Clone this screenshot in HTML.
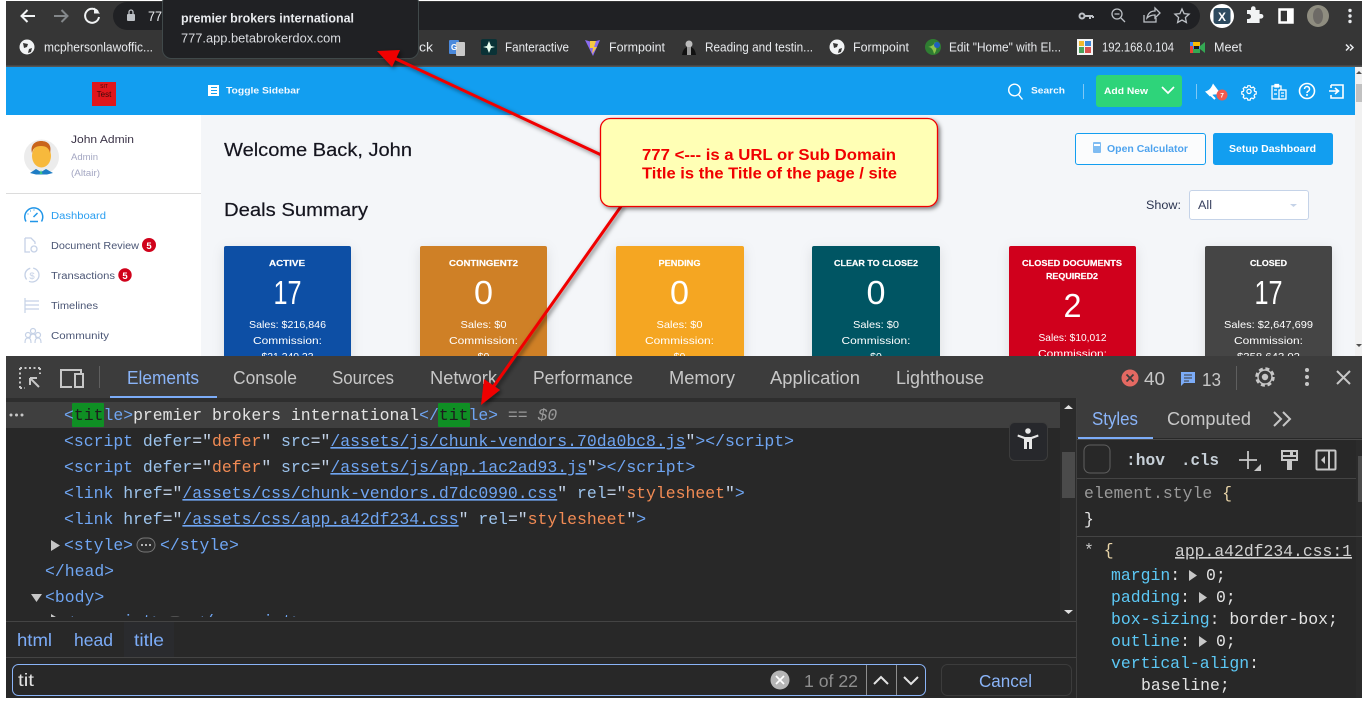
<!DOCTYPE html>
<html><head><meta charset="utf-8"><title>premier brokers international</title>
<style>
html,body{margin:0;padding:0;background:#fff;width:1366px;height:703px;overflow:hidden}
svg{display:block}
text{white-space:pre}
.s{font-family:"Liberation Sans",sans-serif}
.m{font-family:"Liberation Mono",monospace;font-size:16.45px}
.t{fill:#6fa5f2}.n{fill:#9cc3ec}.q{fill:#c5d4e8}.v{fill:#f28b54}.w{fill:#e3e3e3}.p{fill:#5cc8f5}
.c{font-family:"Liberation Sans",sans-serif;fill:#fff;text-anchor:middle}
</style></head><body>
<svg xmlns="http://www.w3.org/2000/svg" width="1366" height="703" viewBox="0 0 1366 703" class="s">
<defs>
<filter id="sh" x="-20%" y="-20%" width="140%" height="140%"><feDropShadow dx="2" dy="2" stdDeviation="2" flood-color="#000" flood-opacity=".5"/></filter>
<filter id="cs" x="-20%" y="-20%" width="140%" height="140%"><feDropShadow dx="0" dy="3" stdDeviation="6" flood-color="#000" flood-opacity=".1"/></filter>
<clipPath id="pg"><rect x="6" y="67" width="1356" height="289"/></clipPath>
<clipPath id="codeclip"><rect x="6" y="400" width="1054" height="217"/></clipPath>
</defs>
<rect width="1366" height="703" fill="#fff"/>

<!-- Browser chrome -->
<rect x="6" y="1" width="1356" height="66" fill="#363636"/>
<rect x="6" y="65.500" width="1356" height="1.500" fill="#555"/>
<rect x="113" y="2" width="1087" height="28" rx="14" fill="#202124"/>
<g fill="none" stroke="#f1f3f4" stroke-width="2">
<path d="M35 16H22M27.500 10l-6 6 6 6"/>
<path d="M54 16h13M61.500 10l6 6-6 6" stroke="#83878a"/>
<path d="M98 12a7 7 0 1 0 1 5"/>
</g>
<path d="M94 7.500v6h6z" fill="#f1f3f4"/>
<rect x="127" y="14" width="8" height="7" rx="1" fill="#bdc1c6"/><path d="M129 14v-2a2 2 0 0 1 4 0v2" fill="none" stroke="#bdc1c6" stroke-width="1.300"/>
<text x="148" y="21" font-size="14" fill="#e8eaed" textLength="14" lengthAdjust="spacingAndGlyphs">77</text>

<!-- address bar right icons -->
<g fill="none" stroke="#bdc1c6" stroke-width="1.300">
<circle cx="1082" cy="16" r="2.500" stroke-width="2"/><path d="M1085 16h8M1090 16v3M1093 16v2" stroke-width="2"/>
<circle cx="1117" cy="14" r="5"/><path d="M1121 18l4 4M1114.500 14h5"/>
<path d="M1144 15v7h12v-4M1147 18c1-5 4-7 8-7V8l5 5-5 5v-3c-3 0-6 1-8 3z"/>
<path d="M1182 9l2.100 4.600 5 .5-3.700 3.400 1 5-4.400-2.500-4.400 2.500 1-5-3.700-3.400 5-.5z"/>
</g>
<circle cx="1222" cy="16" r="12" fill="#fff"/>
<rect x="1213.500" y="8" width="17" height="16" rx="3" fill="#2d4a5f"/>
<text x="1222" y="21" font-size="12" font-weight="bold" fill="#fff" text-anchor="middle">X</text>
<path d="M1247 12h4v-1.500a2.300 2.300 0 0 1 4.600 0V12h4v4h1.500a2.300 2.300 0 0 1 0 4.600h-1.500V25h-12.600v-4h1.500a2.500 2.500 0 0 0 0-5h-1.500z" fill="#f1f3f4" transform="translate(0,-2)"/>
<rect x="1279.500" y="9.500" width="13" height="13" fill="none" stroke="#fff" stroke-width="2.500"/><rect x="1287" y="9" width="6" height="14" fill="#fff"/>
<circle cx="1318" cy="16" r="11" fill="#8f8d80"/><ellipse cx="1318" cy="16" rx="5" ry="8" fill="#6d6a66"/>
<g fill="#e8eaed"><circle cx="1350" cy="10.500" r="1.700"/><circle cx="1350" cy="16" r="1.700"/><circle cx="1350" cy="21.500" r="1.700"/></g>

<!-- Bookmarks -->
<g fill="#e8eaed" font-size="12.500">
<circle cx="27" cy="47" r="7.500" fill="#f1f3f4"/><path d="M23 43l5 1-1 3-3 1zM29 49l3-1-1 4-3 1z" fill="#363636"/>
<text x="44" y="51.500" textLength="109" lengthAdjust="spacingAndGlyphs">mcphersonlawoffic...</text>
<text x="419" y="51.500" textLength="14" lengthAdjust="spacingAndGlyphs">ck</text>
<rect x="449" y="40" width="10" height="14" rx="1" fill="#4a89dc"/><rect x="456" y="42" width="9" height="14" rx="1" fill="#c9c9c9"/>
<text x="451" y="50" font-size="8" font-weight="bold" fill="#fff">G</text>
<rect x="481" y="39" width="16" height="16" rx="2" fill="#0a3236"/><path d="M489 41l2 5 4 1-4 1-2 5-2-5-4-1 4-1z" fill="#eafff0"/>
<text x="505" y="51.500" textLength="64" lengthAdjust="spacingAndGlyphs">Fanteractive</text>
<path d="M585 40l7 2 8-2-7 16z" fill="#8a6cf0"/><path d="M590 41h6l-2 6h3l-5 7 1-6h-3z" fill="#f6c945"/>
<text x="609" y="51.500" textLength="56" lengthAdjust="spacingAndGlyphs">Formpoint</text>
<circle cx="689" cy="44" r="3.500" fill="#bbb"/><path d="M682 55c1-6 3-8 7-8s6 2 7 8z" fill="#111"/><rect x="687" y="47" width="4" height="8" fill="#999"/>
<text x="705" y="51.500" textLength="108" lengthAdjust="spacingAndGlyphs">Reading and testin...</text>
<circle cx="837" cy="47" r="7.500" fill="#f1f3f4"/><path d="M833 43l5 1-1 3-3 1zM839 49l3-1-1 4-3 1z" fill="#363636"/>
<text x="853" y="51.500" textLength="56" lengthAdjust="spacingAndGlyphs">Formpoint</text>
<circle cx="933" cy="47" r="8" fill="#2f7d32"/><path d="M928 47c3 0 5 2 6 7 3-3 3-8 1-12-1 3-3 4-7 5z" fill="#8bc34a"/><circle cx="937" cy="45" r="3" fill="#1e5fbf"/>
<text x="949" y="51.500" textLength="112" lengthAdjust="spacingAndGlyphs">Edit "Home" with El...</text>
<rect x="1077" y="39" width="16" height="16" fill="#f4f4f4"/><rect x="1079" y="41" width="5" height="5" fill="#f1b92c"/><rect x="1085" y="41" width="6" height="5" fill="#3f86d6"/><rect x="1079" y="47" width="5" height="6" fill="#4aa35a"/><rect x="1085" y="47" width="6" height="6" fill="#d9534f"/>
<text x="1102" y="51.500" textLength="72" lengthAdjust="spacingAndGlyphs">192.168.0.104</text>
<rect x="1190" y="42" width="10" height="11" fill="#4285f4"/><rect x="1193" y="42" width="7" height="4" fill="#fbbc04"/><rect x="1190" y="46" width="3" height="7" fill="#ea4335"/><rect x="1193" y="49" width="7" height="4" fill="#34a853"/><path d="M1200 46l5-4v11l-5-4z" fill="#34a853"/><rect x="1194" y="46" width="5" height="3" fill="#1a1a1a"/>
<text x="1214" y="51.500" textLength="28" lengthAdjust="spacingAndGlyphs">Meet</text>
<path d="M1346 44.500l3 3-3 3M1350 44.500l3 3-3 3" fill="none" stroke="#e8eaed" stroke-width="1.500"/>
</g>

<!-- Web page -->
<g clip-path="url(#pg)">
<rect x="6" y="67" width="1349" height="289" fill="#f4f6f9"/>
<rect x="6" y="67" width="1349" height="48" fill="#129ef0"/>
<rect x="1355" y="67" width="7" height="289" fill="#f1f1f1"/><rect x="1356" y="84" width="6" height="18" fill="#c1c1c1"/>
<path d="M1356 74l3-3 3 3z" fill="#505050"/><path d="M1356 344l3 3 3-3z" fill="#505050"/>
<rect x="6" y="115" width="195" height="241" fill="#fff"/>

<rect x="92" y="82" width="24" height="24" fill="#e0161c"/>
<text x="104" y="88" font-size="5" fill="#3a0a0a" text-anchor="middle">SIT</text>
<text x="104" y="97" font-size="8" fill="#3a0a0a" text-anchor="middle">Test</text>

<path d="M208 85h11v11h-11z" fill="#fff"/><path d="M211 87.500h6M211 90.500h6M211 93.500h6" stroke="#129ef0" stroke-width="1"/>
<text x="226" y="93.500" font-size="9.500" font-weight="bold" fill="#f2f9ff" textLength="74" lengthAdjust="spacingAndGlyphs">Toggle Sidebar</text>

<circle cx="1014.500" cy="90" r="5.800" fill="none" stroke="#fff" stroke-width="1.400"/><path d="M1018.500 94.500l4 5" stroke="#fff" stroke-width="1.400"/>
<text x="1031" y="93.500" font-size="9.500" font-weight="bold" fill="#f2f9ff" textLength="34" lengthAdjust="spacingAndGlyphs">Search</text>
<rect x="1083" y="84" width="1" height="15" fill="#7fc8f5"/>
<rect x="1096" y="75" width="86" height="32" rx="3" fill="#2ed47a"/>
<text x="1104" y="94" font-size="9.500" font-weight="bold" fill="#fff" textLength="44" lengthAdjust="spacingAndGlyphs">Add New</text>
<path d="M1162 87l6 6 6-6" fill="none" stroke="#fff" stroke-width="1.700"/>
<rect x="1196" y="84" width="1" height="15" fill="#7fc8f5"/>
<path d="M1205 91.500c4-1 6-3 8-8l9 12c-5-1.500-8-1.500-11 0l-1 1z" fill="#fff"/><path d="M1211 95l4 4" stroke="#fff" stroke-width="2"/>
<circle cx="1222" cy="95" r="5.500" fill="#f05a50"/><text x="1222" y="97.500" font-size="6.500" font-weight="bold" fill="#fff" text-anchor="middle">7</text>
<g fill="none" stroke="#fff" stroke-width="1.300">
<g transform="translate(1249,91) scale(.76) translate(-1249,-90.500)" stroke-width="1.600"><path d="M1247.500 84h3l.5 2 1.800.8 1.800-1 2.100 2.100-1 1.800.8 1.800 2 .5v3l-2 .5-.8 1.800 1 1.800-2.100 2.100-1.800-1-1.800.8-.5 2h-3l-.5-2-1.800-.8-1.800 1-2.100-2.100 1-1.800-.8-1.800-2-.5v-3l2-.5.8-1.800-1-1.800 2.100-2.100 1.800 1 1.800-.8z" transform="translate(0,-.5)"/>
<circle cx="1249" cy="91" r="2.800"/></g>
<rect x="1272" y="86" width="9" height="13"/><rect x="1275" y="84.500" width="3.500" height="2.500" fill="#fff"/><rect x="1279" y="90" width="7" height="9" fill="#129ef0"/><path d="M1281 93h3M1281 96h3M1274 90h3M1274 94h3"/>
<circle cx="1307" cy="91" r="7.500" stroke-width="1.600"/>
<path d="M1304.500 89a2.500 2.500 0 1 1 3.500 2.300c-.7.400-1 .9-1 1.700" stroke-width="1.500"/>
<path d="M1331 85h12v13h-12v-3M1331 88v-3" stroke-width="1.600"/>
<path d="M1329 91h9M1335 88l3.500 3-3.500 3" stroke-width="1.600"/>
</g><circle cx="1307" cy="95" r="1" fill="#fff"/>

<!-- Sidebar -->
<circle cx="41.500" cy="157" r="17.500" fill="#ececec"/>
<ellipse cx="41.500" cy="156" rx="9.500" ry="11.500" fill="#f7b93c"/>
<path d="M32 153c-2-8 3-12 9-12 7 0 11 4 9 12-1-5-4-7-9-7-5 0-8 2-9 7z" fill="#c9641b"/>
<path d="M30 173l6-4 5 3 5-3 7 4-6 1.500H36z" fill="#1d7cc4"/><path d="M41 170l-1.500 4h3z" fill="#37c77d"/>
<text x="71" y="143" font-size="11" fill="#3b3347" textLength="63" lengthAdjust="spacingAndGlyphs">John Admin</text>
<text x="71" y="160" font-size="8.800" fill="#a3a6c2" textLength="27" lengthAdjust="spacingAndGlyphs">Admin</text>
<text x="71" y="176" font-size="9" fill="#a3a6c2" textLength="29" lengthAdjust="spacingAndGlyphs">(Altair)</text>
<rect x="6" y="193" width="195" height="1" fill="#dcdcdc"/>

<g font-size="9.800">
<path d="M26 221.500a9 9 0 1 1 15.500 0" fill="none" stroke="#2196e8" stroke-width="1.500"/>
<path d="M30 221.500h8M33.500 217l4-4" stroke="#2196e8" stroke-width="1.500"/>
<path d="M27.500 214h1M30 211h1M34 209.500v1" stroke="#2196e8" stroke-width="1"/>
<text x="51" y="219" fill="#2a9ef0" textLength="55" lengthAdjust="spacingAndGlyphs">Dashboard</text>

<path d="M25 238h6l4 4v2M25 238v14h5" fill="none" stroke="#c5d1e6" stroke-width="1.300"/><circle cx="34" cy="249" r="3" fill="none" stroke="#c5d1e6" stroke-width="1.300"/>
<text x="51" y="249" fill="#4b5675" textLength="88" lengthAdjust="spacingAndGlyphs">Document Review</text>
<circle cx="149" cy="245" r="7" fill="#d0021b"/><text x="149" y="249" font-size="9.500" font-weight="bold" fill="#fff" text-anchor="middle">5</text>

<circle cx="32" cy="275" r="7" fill="none" stroke="#c5d1e6" stroke-width="1.300" stroke-dasharray="14 3"/><text x="32" y="279" font-size="9.500" fill="#c5d1e6" text-anchor="middle">$</text>
<text x="51" y="279" fill="#4b5675" textLength="64" lengthAdjust="spacingAndGlyphs">Transactions</text>
<circle cx="125" cy="275" r="6.700" fill="#d0021b"/><text x="125" y="279" font-size="9.500" font-weight="bold" fill="#fff" text-anchor="middle">5</text>

<path d="M25 298v15M25 301h14M25 305h14M25 309h14" fill="none" stroke="#c5d1e6" stroke-width="1.200"/>
<text x="51" y="309" fill="#4b5675" textLength="47" lengthAdjust="spacingAndGlyphs">Timelines</text>

<g fill="none" stroke="#c5d1e6" stroke-width="1.200"><circle cx="33" cy="331" r="2.500"/><circle cx="28" cy="335" r="2.500"/><circle cx="38" cy="335" r="2.500"/><path d="M25 343c0-4 1-5 3-5s3 1 3 5M35 343c0-4 1-5 3-5s3 1 3 5M30 338c0-3 1-4 3-4s3 1 3 4"/></g>
<text x="51" y="339" fill="#4b5675" textLength="58" lengthAdjust="spacingAndGlyphs">Community</text>
</g>

<!-- Main -->
<text x="224" y="156" font-size="18.500" fill="#15151f" stroke="#15151f" stroke-width=".2" textLength="188" lengthAdjust="spacingAndGlyphs">Welcome Back, John</text>
<text x="224" y="216" font-size="18.500" fill="#15151f" stroke="#15151f" stroke-width=".2" textLength="144" lengthAdjust="spacingAndGlyphs">Deals Summary</text>

<rect x="1075.500" y="133.500" width="130" height="31" rx="2.500" fill="#fbfcfd" stroke="#129ef0"/>
<rect x="1093" y="142" width="8" height="11" rx="1" fill="#7fbcf2"/><rect x="1094" y="144" width="6" height="2" fill="#fff"/>
<text x="1107" y="152" font-size="9.800" font-weight="bold" fill="#4ea3ee" textLength="81" lengthAdjust="spacingAndGlyphs">Open Calculator</text>
<rect x="1213" y="133" width="120" height="32" rx="2.500" fill="#129ef0"/>
<text x="1229" y="152" font-size="9.800" font-weight="bold" fill="#fff" textLength="87" lengthAdjust="spacingAndGlyphs">Setup Dashboard</text>
<text x="1146" y="209" font-size="11.500" fill="#2b3450" textLength="35" lengthAdjust="spacingAndGlyphs">Show:</text>
<rect x="1189.500" y="190.500" width="119" height="29" rx="2.500" fill="#fff" stroke="#c5d3e8"/>
<text x="1198" y="209" font-size="11.500" fill="#3a4260" textLength="14" lengthAdjust="spacingAndGlyphs">All</text>
<path d="M1290 204h7l-3.500 3z" fill="#c5d3e8"/>

<!-- Cards -->
<g filter="url(#cs)">
<rect x="224" y="246" width="127" height="130" rx="2" fill="#0d50a5"/>
<rect x="420" y="246" width="127" height="130" rx="2" fill="#cf8027"/>
<rect x="616" y="246" width="128" height="130" rx="2" fill="#f5a623"/>
<rect x="812" y="246" width="128" height="130" rx="2" fill="#055463"/>
<rect x="1009" y="246" width="127" height="130" rx="2" fill="#d0021b"/>
<rect x="1205" y="246" width="127" height="130" rx="2" fill="#444444"/>
</g>
<g class="c">
<g font-size="8.500" font-weight="bold" stroke="#fff" stroke-width=".2">
<text x="287" y="266" textLength="36" lengthAdjust="spacingAndGlyphs">ACTIVE</text>
<text x="483.500" y="266" textLength="69" lengthAdjust="spacingAndGlyphs">CONTINGENT2</text>
<text x="679.500" y="266" textLength="42" lengthAdjust="spacingAndGlyphs">PENDING</text>
<text x="876" y="266" textLength="84" lengthAdjust="spacingAndGlyphs">CLEAR TO CLOSE2</text>
<text x="1072" y="266" textLength="100" lengthAdjust="spacingAndGlyphs">CLOSED DOCUMENTS</text>
<text x="1072" y="279" textLength="52" lengthAdjust="spacingAndGlyphs">REQUIRED2</text>
<text x="1268.500" y="266" textLength="37" lengthAdjust="spacingAndGlyphs">CLOSED</text>
</g>
<g font-size="33">
<text x="287.500" y="304" textLength="28" lengthAdjust="spacingAndGlyphs">17</text>
<text x="483.500" y="304" textLength="19" lengthAdjust="spacingAndGlyphs">0</text>
<text x="679.500" y="304" textLength="19" lengthAdjust="spacingAndGlyphs">0</text>
<text x="876" y="304" textLength="19" lengthAdjust="spacingAndGlyphs">0</text>
<text x="1072.500" y="317" textLength="18" lengthAdjust="spacingAndGlyphs">2</text>
<text x="1268.500" y="304" textLength="28" lengthAdjust="spacingAndGlyphs">17</text>
</g>
<g font-size="10.500">
<text x="287.500" y="328" textLength="77" lengthAdjust="spacingAndGlyphs">Sales: $216,846</text>
<text x="287.500" y="344" textLength="69" lengthAdjust="spacingAndGlyphs">Commission:</text>
<text x="287.500" y="360" textLength="52" lengthAdjust="spacingAndGlyphs">$21,240.23</text>
<text x="483.500" y="328" textLength="46" lengthAdjust="spacingAndGlyphs">Sales: $0</text>
<text x="483.500" y="344" textLength="69" lengthAdjust="spacingAndGlyphs">Commission:</text>
<text x="483.500" y="360">$0</text>
<text x="679.500" y="328" textLength="46" lengthAdjust="spacingAndGlyphs">Sales: $0</text>
<text x="679.500" y="344" textLength="69" lengthAdjust="spacingAndGlyphs">Commission:</text>
<text x="679.500" y="360">$0</text>
<text x="876" y="328" textLength="46" lengthAdjust="spacingAndGlyphs">Sales: $0</text>
<text x="876" y="344" textLength="69" lengthAdjust="spacingAndGlyphs">Commission:</text>
<text x="876" y="360">$0</text>
<text x="1072.500" y="341" textLength="68" lengthAdjust="spacingAndGlyphs">Sales: $10,012</text>
<text x="1072.500" y="357" textLength="69" lengthAdjust="spacingAndGlyphs">Commission:</text>
<text x="1268.500" y="328" textLength="89" lengthAdjust="spacingAndGlyphs">Sales: $2,647,699</text>
<text x="1268.500" y="344" textLength="69" lengthAdjust="spacingAndGlyphs">Commission:</text>
<text x="1268.500" y="360" textLength="63" lengthAdjust="spacingAndGlyphs">$358,643.02</text>
</g>
</g>
</g>

<!-- Devtools -->
<rect x="6" y="356" width="1356" height="342" fill="#282828"/>
<rect x="6" y="356" width="1356" height="42" fill="#3c3c3c"/>
<rect x="6" y="398" width="1071" height="4" fill="#2e2e2e"/>
<g fill="none" stroke="#c7c7c7" stroke-width="2">
<path d="M20 368h20M20 368v20M20 388h5M40 368v6" stroke-dasharray="2 2.500"/><path d="M30 378l9 9M30 378h7M30 378v7" stroke="#c7c7c7"/>
<path d="M61 386v-16h20v4M60 387h12" /><rect x="75" y="374" width="8" height="13" />
</g>
<rect x="99" y="366" width="1" height="22" fill="#5f5f5f"/>
<rect x="110" y="396" width="107" height="2" fill="#7cacf8"/>
<g font-size="18" fill="#c7c7c7">
<text x="127" y="384" fill="#8ab4f8" textLength="72" lengthAdjust="spacingAndGlyphs">Elements</text>
<text x="233" y="384" textLength="64" lengthAdjust="spacingAndGlyphs">Console</text>
<text x="332" y="384" textLength="62" lengthAdjust="spacingAndGlyphs">Sources</text>
<text x="430" y="384" textLength="67" lengthAdjust="spacingAndGlyphs">Network</text>
<text x="533" y="384" textLength="100" lengthAdjust="spacingAndGlyphs">Performance</text>
<text x="669" y="384" textLength="66" lengthAdjust="spacingAndGlyphs">Memory</text>
<text x="770" y="384" textLength="90" lengthAdjust="spacingAndGlyphs">Application</text>
<text x="896" y="384" textLength="88" lengthAdjust="spacingAndGlyphs">Lighthouse</text>
<circle cx="1130" cy="378" r="8.500" fill="#e46962"/><path d="M1126.500 374.500l7 7M1133.500 374.500l-7 7" stroke="#3c3c3c" stroke-width="1.800"/>
<text x="1144" y="385" textLength="21" lengthAdjust="spacingAndGlyphs">40</text>
<path d="M1181 372h14v11h-11l-3 3z" fill="#7cacf8"/><path d="M1184 375h8M1184 378h8M1184 381h5" stroke="#3c3c3c" stroke-width="1"/>
<text x="1202" y="386" textLength="19" lengthAdjust="spacingAndGlyphs">13</text>
</g>
<rect x="1236" y="366" width="1" height="24" fill="#5f5f5f"/>
<circle cx="1265" cy="377" r="8.500" fill="none" stroke="#c7c7c7" stroke-width="2.500" stroke-dasharray="4 2.700"/><circle cx="1265" cy="377" r="7" fill="none" stroke="#c7c7c7" stroke-width="1.400"/><circle cx="1265" cy="377" r="3.200" fill="#c7c7c7"/>
<g fill="#c7c7c7"><circle cx="1307" cy="370" r="2"/><circle cx="1307" cy="377" r="2"/><circle cx="1307" cy="384" r="2"/></g>
<path d="M1337 371l13 13M1350 371l-13 13" stroke="#c7c7c7" stroke-width="2"/>

<!-- Elements code -->
<rect x="6" y="402" width="1054" height="26" fill="#3f3f3f"/>
<rect x="1060" y="398" width="16" height="223" fill="#2b2b2b"/>
<rect x="1062" y="452" width="13" height="46" fill="#4b4b4b"/>
<path d="M1064 409l4.500-4 4.500 4z" fill="#e0e0e0"/><path d="M1064 610l4.500 4 4.500-4z" fill="#e0e0e0"/>
<rect x="1076" y="398" width="1" height="300" fill="#3f3f3f"/>
<g fill="#c7c7c7"><circle cx="11" cy="415" r="1.500"/><circle cx="16.500" cy="415" r="1.500"/><circle cx="22" cy="415" r="1.500"/></g>
<rect x="72" y="403" width="32" height="24" fill="#0f8f24" rx="1"/><rect x="438" y="403" width="32" height="24" fill="#0f8f24" rx="1"/>

<g clip-path="url(#codeclip)">
<text class="m" y="420"><tspan x="64" class="t">&lt;</tspan><tspan fill="#1d1d1d">tit</tspan><tspan class="t">le&gt;</tspan><tspan class="w">premier brokers international</tspan><tspan class="t">&lt;/</tspan><tspan fill="#1d1d1d">tit</tspan><tspan class="t">le&gt;</tspan><tspan fill="#9a9a9a"> == </tspan><tspan fill="#9a9a9a" font-style="italic">$0</tspan></text>
<text class="m" y="446"><tspan x="64" class="t">&lt;script</tspan><tspan class="n"> defer</tspan><tspan class="q">="</tspan><tspan class="v">defer</tspan><tspan class="q">"</tspan><tspan class="n"> src</tspan><tspan class="q">="</tspan><tspan class="t" text-decoration="underline">/assets/js/chunk-vendors.70da0bc8.js</tspan><tspan class="q">"</tspan><tspan class="t">&gt;&lt;/script&gt;</tspan></text>
<text class="m" y="472"><tspan x="64" class="t">&lt;script</tspan><tspan class="n"> defer</tspan><tspan class="q">="</tspan><tspan class="v">defer</tspan><tspan class="q">"</tspan><tspan class="n"> src</tspan><tspan class="q">="</tspan><tspan class="t" text-decoration="underline">/assets/js/app.1ac2ad93.js</tspan><tspan class="q">"</tspan><tspan class="t">&gt;&lt;/script&gt;</tspan></text>
<text class="m" y="498"><tspan x="64" class="t">&lt;link</tspan><tspan class="n"> href</tspan><tspan class="q">="</tspan><tspan class="t" text-decoration="underline">/assets/css/chunk-vendors.d7dc0990.css</tspan><tspan class="q">"</tspan><tspan class="n"> rel</tspan><tspan class="q">="</tspan><tspan class="v">stylesheet</tspan><tspan class="q">"</tspan><tspan class="t">&gt;</tspan></text>
<text class="m" y="524"><tspan x="64" class="t">&lt;link</tspan><tspan class="n"> href</tspan><tspan class="q">="</tspan><tspan class="t" text-decoration="underline">/assets/css/app.a42df234.css</tspan><tspan class="q">"</tspan><tspan class="n"> rel</tspan><tspan class="q">="</tspan><tspan class="v">stylesheet</tspan><tspan class="q">"</tspan><tspan class="t">&gt;</tspan></text>
<path d="M51 540l9 5.500-9 5.500z" fill="#c7c7c7"/>
<text class="m t" x="64" y="550">&lt;style&gt;</text>
<rect x="137" y="538" width="18" height="14" rx="7" fill="#2d2d2d" stroke="#777"/><g fill="#e0e0e0"><circle cx="142" cy="545" r="1"/><circle cx="146" cy="545" r="1"/><circle cx="150" cy="545" r="1"/></g>
<text class="m t" x="160" y="550">&lt;/style&gt;</text>
<text class="m t" x="45" y="576">&lt;/head&gt;</text>
<path d="M31 594h11l-5.500 8z" fill="#c7c7c7"/>
<text class="m t" x="45" y="602">&lt;body&gt;</text>
<path d="M51 614l9 5.500-9 5.500z" fill="#c7c7c7"/>
<text class="m t" x="64" y="626">&lt;noscript&gt;</text>
<rect x="166" y="617" width="18" height="14" rx="7" fill="#2d2d2d" stroke="#777"/>
<text class="m t" x="194" y="626">&lt;/noscript&gt;</text>
</g>

<!-- breadcrumb / search -->
<rect x="6" y="621" width="1070" height="1" fill="#444"/>
<rect x="124" y="622" width="50" height="35" fill="#2a2b2e"/>
<rect x="6" y="657" width="1070" height="1" fill="#444"/>
<g font-size="17.500" fill="#7cacf8">
<text x="17" y="646" textLength="35" lengthAdjust="spacingAndGlyphs">html</text>
<text x="74" y="646" textLength="39" lengthAdjust="spacingAndGlyphs">head</text>
<text x="134" y="646" textLength="30" lengthAdjust="spacingAndGlyphs">title</text>
</g>
<rect x="12.500" y="664.500" width="913" height="31" rx="6" fill="#282828" stroke="#8ab4f8"/>
<text x="18" y="686" font-size="17.500" fill="#e3e3e3" textLength="16" lengthAdjust="spacingAndGlyphs">tit</text>
<circle cx="780" cy="680" r="9.500" fill="#b5b5b5"/><path d="M776 676l8 8M784 676l-8 8" stroke="#fff" stroke-width="1.700"/>
<text x="804" y="687" font-size="17.500" fill="#8e8e8e" textLength="54" lengthAdjust="spacingAndGlyphs">1 of 22</text>
<rect x="866" y="665" width="1" height="30" fill="#8e8e8e"/><rect x="896" y="665" width="1" height="30" fill="#8e8e8e"/>
<path d="M874 684l7-7 7 7M904 677l7 7 7-7" fill="none" stroke="#e3e3e3" stroke-width="2"/>
<rect x="941.500" y="664.500" width="130" height="31" rx="6" fill="#282828" stroke="#3c3c3c"/>
<text x="979" y="687" font-size="17.500" fill="#8ab4f8" textLength="53" lengthAdjust="spacingAndGlyphs">Cancel</text>

<!-- Styles pane -->
<rect x="1077" y="398" width="285" height="40" fill="#3c3c3c"/>
<rect x="1078" y="437" width="75" height="2" fill="#7cacf8"/>
<rect x="1077" y="439" width="285" height="1" fill="#4a4a4a"/>
<text x="1092" y="425" font-size="18" fill="#8ab4f8" textLength="46" lengthAdjust="spacingAndGlyphs">Styles</text>
<text x="1167" y="425" font-size="18" fill="#c7c7c7" textLength="84" lengthAdjust="spacingAndGlyphs">Computed</text>
<path d="M1274 412l7 7-7 7M1283 412l7 7-7 7" fill="none" stroke="#c7c7c7" stroke-width="2"/>
<rect x="1084" y="445" width="26" height="28" rx="6" fill="none" stroke="#5f5f5f"/>
<text class="m" x="1126" y="465" font-weight="bold" fill="#c7d0d8" textLength="39" lengthAdjust="spacingAndGlyphs">:hov</text>
<text class="m" x="1181" y="465" font-weight="bold" fill="#c7d0d8" textLength="38" lengthAdjust="spacingAndGlyphs">.cls</text>
<path d="M1239 460h18M1248 451v18" stroke="#c7c7c7" stroke-width="1.800"/><path d="M1261 464v7h-7z" fill="#c7c7c7"/>
<path d="M1281 450h17v11h-6v9h-5v-9h-6z" fill="#c7c7c7"/><rect x="1283" y="452" width="13" height="3" fill="#282828"/><rect x="1290" y="450" width="3" height="5" fill="#c7c7c7"/><rect x="1283" y="457" width="13" height="2" fill="#282828"/>
<rect x="1316.500" y="450.500" width="19" height="19" rx="1" fill="none" stroke="#c7c7c7" stroke-width="2"/><rect x="1328" y="450" width="2" height="20" fill="#c7c7c7"/><path d="M1325 456v8l-4-4z" fill="#c7c7c7"/>
<rect x="1077" y="478" width="285" height="1" fill="#444"/>
<rect x="1356" y="440" width="6" height="258" fill="#2b2b2b"/><rect x="1358" y="456" width="4" height="46" fill="#4b4b4b"/>
<text class="m" x="1084" y="498"><tspan fill="#9a9a9a">element.style </tspan><tspan fill="#e8d4a8">{</tspan></text>
<text class="m" x="1084" y="524" fill="#e3e3e3">}</text>
<rect x="1077" y="536" width="285" height="1" fill="#444"/>
<text class="m" x="1084" y="555"><tspan fill="#c7c7c7">* </tspan><tspan fill="#e8d4a8">{</tspan></text>
<text class="m" x="1175" y="556" fill="#d0d0d0" text-decoration="underline" textLength="177" lengthAdjust="spacingAndGlyphs">app.a42df234.css:1</text>
<g class="m">
<text x="1111" y="580"><tspan class="p">margin</tspan><tspan class="w">:</tspan></text><path d="M1189 570l8 5.500-8 5.500z" fill="#c7c7c7"/><text x="1206" y="580" class="w">0;</text>
<text x="1111" y="602"><tspan class="p">padding</tspan><tspan class="w">:</tspan></text><path d="M1199 592l8 5.500-8 5.500z" fill="#c7c7c7"/><text x="1216" y="602" class="w">0;</text>
<text x="1111" y="624"><tspan class="p">box-sizing</tspan><tspan class="w">: border-box;</tspan></text>
<text x="1111" y="646"><tspan class="p">outline</tspan><tspan class="w">:</tspan></text><path d="M1199 636l8 5.500-8 5.500z" fill="#c7c7c7"/><text x="1216" y="646" class="w">0;</text>
<text x="1111" y="668"><tspan class="p">vertical-align</tspan><tspan class="w">:</tspan></text>
<text x="1141" y="690" class="w">baseline;</text>
</g>

<!-- Accessibility button -->
<rect x="1009.500" y="422.500" width="38" height="38" rx="5" fill="#27282c" stroke="#3c3c3c"/>
<circle cx="1028" cy="431" r="2.800" fill="#e8e8e8"/>
<path d="M1018 434.500l7 2.500h6l7-2.500.6 2-6.600 2.500v10h-3v-7h-2v7h-3v-10l-6.600-2.500z" fill="#e8e8e8"/>

<!-- Tooltip -->
<rect x="162.500" y="-6" width="256" height="64.500" rx="9" fill="#202124" stroke="#40494a"/>
<text x="181" y="22.500" font-size="12.500" font-weight="bold" fill="#e8eaed" textLength="173" lengthAdjust="spacingAndGlyphs">premier brokers international</text>
<text x="181" y="42.500" font-size="12.500" fill="#dadce0" textLength="160" lengthAdjust="spacingAndGlyphs">777.app.betabrokerdox.com</text>

<!-- Annotation arrows -->
<g filter="url(#sh)">
<path d="M612 160L392 57" stroke="#f00000" stroke-width="3" fill="none"/>
<path d="M377 51l23-1-8 17z" fill="#f00000"/>
<path d="M622 205L489 393" stroke="#f00000" stroke-width="3" fill="none"/>
<path d="M481 405l3-26 16 11z" fill="#f00000"/>
</g>
<g filter="url(#sh)"><rect x="600.500" y="118.500" width="337" height="88" rx="10" fill="#ffffb5" stroke="#f00000" stroke-width="1.300"/></g>
<text x="642" y="160" font-size="15.500" font-weight="bold" fill="#f00000" textLength="254" lengthAdjust="spacingAndGlyphs">777 &lt;--- is a URL or Sub Domain</text>
<text x="642" y="178.500" font-size="15.500" font-weight="bold" fill="#f00000" textLength="255" lengthAdjust="spacingAndGlyphs">Title is the Title of the page / site</text>
</svg>
</body></html>
